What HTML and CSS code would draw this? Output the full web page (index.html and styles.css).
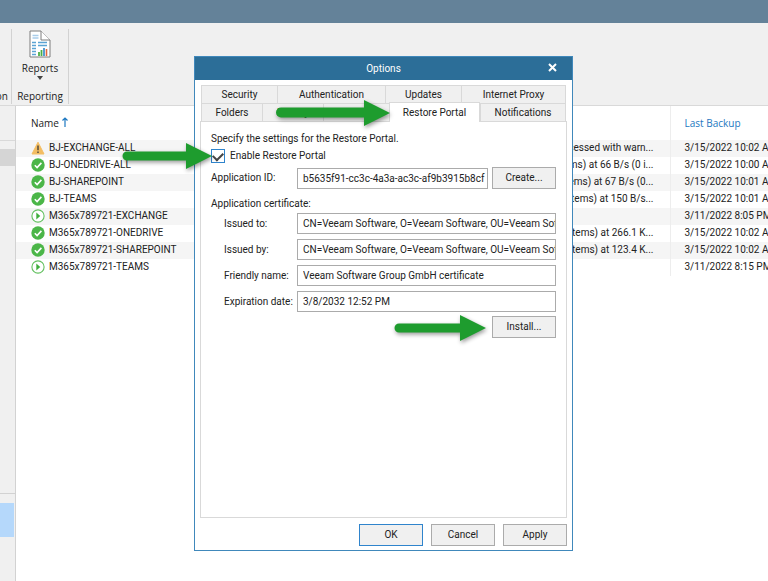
FILE: index.html
```html
<!DOCTYPE html>
<html lang="en">
<head>
    <meta charset="UTF-8">
    <meta name="viewport" content="width=device-width, initial-scale=1.0">
    <title>Options</title>
    <link rel="stylesheet" href="styles.css">
</head>
<body>
<svg class="defs" aria-hidden="true">
    <symbol id="ok" viewBox="0 0 14 14">
        <circle cx="7" cy="7" r="6.7" fill="#4bb648"/>
        <path d="M3.8 7.2l2.3 2.3 4.3-4.6" fill="none" stroke="#fff" stroke-width="1.6"/>
    </symbol>
    <symbol id="play" viewBox="0 0 14 14">
        <circle cx="7" cy="7" r="6.1" fill="#fff" stroke="#62c05f" stroke-width="1.1"/>
        <path d="M5.3 3.6v6.8L9.3 7z" fill="#3fae3c"/>
    </symbol>
    <symbol id="warn" viewBox="0 0 14 14">
        <path d="M7 1.2l6 11.8H1z" fill="#f3bd62" stroke="#f3bd62" stroke-linejoin="round"/>
        <path d="M7 4.6v4.6M7 10.4v1.6" stroke="#5b5140" stroke-width="1.6"/>
    </symbol>
</svg>

<div class="app">
    <div class="title-bar"></div>
    <div class="ribbon">
        <div class="ribbon-group ribbon-cut">
            <span>on</span>
        </div>
        <div class="ribbon-group">
            <button class="ribbon-button">
                <svg width="22" height="28" viewBox="0 0 22 28">
                    <path d="M1 1h11l9 9v17H1z" fill="#fff" stroke="#7d7d7d"/>
                    <path d="M12 1v9h9" fill="#fff" stroke="#7d7d7d"/>
                    <path d="M3.500 5.500h6M3.500 8h6" stroke="#a9cdea" stroke-width="1.500"/>
                    <path d="M3 12.500h4M9 12.500h9M3 15.500h4M9 15.500h9M3 18.500h4M3 21.500h4M3 24.500h4" stroke="#5ba4d4" stroke-width="1.700"/>
                    <path d="M10 26v-4M12.500 26v-6" stroke="#4cae45" stroke-width="1.800"/>
                    <path d="M15 26v-8" stroke="#2c84c6" stroke-width="1.600"/>
                    <path d="M17.500 26v-7" stroke="#e4673c" stroke-width="1.600"/>
                </svg>
                <span>Reports</span>
                <svg width="6" height="4" viewBox="0 0 6 4"><path d="M0 0h6L3 4z" fill="#444"/></svg>
            </button>
            <span>Reporting</span>
        </div>
    </div>

    <div class="workspace">
        <div class="sidebar">
            <div class="side-heading"></div>
            <div class="side-item"></div>
            <div class="side-tree"></div>
            <div class="side-active"></div>
        </div>
        <table class="jobs">
            <thead>
                <tr>
                    <th class="col-name">Name <svg width="6" height="10" viewBox="0 0 6 10"><path d="M3 10V1M.5 3.500L3 1l2.500 2.500" fill="none" stroke="#1d78c1" stroke-width="1.200"/></svg></th>
                    <th class="col-details"></th>
                    <th class="col-last">Last Backup</th>
                </tr>
            </thead>
            <tbody>
                <tr><td><svg class="status"><use href="#warn"/></svg>BJ-EXCHANGE-ALL</td><td>Processed with warn...</td><td>3/15/2022 10:02 AM</td></tr>
                <tr><td><svg class="status"><use href="#ok"/></svg>BJ-ONEDRIVE-ALL</td><td>items) at 66 B/s (0 i...</td><td>3/15/2022 10:00 AM</td></tr>
                <tr><td><svg class="status"><use href="#ok"/></svg>BJ-SHAREPOINT</td><td>items) at 67 B/s (0...</td><td>3/15/2022 10:01 AM</td></tr>
                <tr><td><svg class="status"><use href="#ok"/></svg>BJ-TEAMS</td><td>items) at 150 B/s...</td><td>3/15/2022 10:01 AM</td></tr>
                <tr><td><svg class="status"><use href="#play"/></svg>M365x789721-EXCHANGE</td><td></td><td>3/11/2022 8:05 PM</td></tr>
                <tr><td><svg class="status"><use href="#ok"/></svg>M365x789721-ONEDRIVE</td><td>items) at 266.1 K...</td><td>3/15/2022 10:02 AM</td></tr>
                <tr><td><svg class="status"><use href="#ok"/></svg>M365x789721-SHAREPOINT</td><td>items) at 123.4 K...</td><td>3/15/2022 10:02 AM</td></tr>
                <tr><td><svg class="status"><use href="#play"/></svg>M365x789721-TEAMS</td><td></td><td>3/11/2022 8:15 PM</td></tr>
            </tbody>
        </table>
    </div>
</div>

<div class="overlay">
    <div class="dialog" role="dialog" aria-labelledby="dialog-title">
        <div class="dialog-title">
            <span id="dialog-title">Options</span>
            <button class="close" aria-label="Close">
                <svg width="9" height="9" viewBox="0 0 9 9"><path d="M1 1l7 7M8 1L1 8" stroke="#fff" stroke-width="2"/></svg>
            </button>
        </div>
        <div class="dialog-body">
            <div class="tabs">
                <button class="tab tab-security">Security</button>
                <button class="tab tab-auth">Authentication</button>
                <button class="tab tab-updates">Updates</button>
                <button class="tab tab-proxy">Internet Proxy</button>
            </div>
            <div class="tabs">
                <button class="tab tab-folders">Folders</button>
                <button class="tab tab-folders">History</button>
                <button class="tab tab-blank"></button>
                <button class="tab tab-restore active">Restore Portal</button>
                <button class="tab tab-notify">Notifications</button>
            </div>
            <div class="panel">
                <p>Specify the settings for the Restore Portal.</p>
                <div class="check-row">
                    <input type="checkbox" id="enable" checked>
                    <label for="enable">Enable Restore Portal</label>
                </div>
                <div class="app-row">
                    <label for="app-id">Application ID:</label>
                    <input type="text" id="app-id" value="b5635f91-cc3c-4a3a-ac3c-af9b3915b8cf">
                    <button class="btn">Create...</button>
                </div>
                <p>Application certificate:</p>
                <div class="fields">
                    <div class="field">
                        <label for="issued-to">Issued to:</label>
                        <input type="text" id="issued-to" value="CN=Veeam Software, O=Veeam Software, OU=Veeam Software" readonly>
                    </div>
                    <div class="field">
                        <label for="issued-by">Issued by:</label>
                        <input type="text" id="issued-by" value="CN=Veeam Software, O=Veeam Software, OU=Veeam Software" readonly>
                    </div>
                    <div class="field">
                        <label for="friendly">Friendly name:</label>
                        <input type="text" id="friendly" value="Veeam Software Group GmbH certificate" readonly>
                    </div>
                    <div class="field">
                        <label for="expires">Expiration date:</label>
                        <input type="text" id="expires" value="3/8/2032 12:52 PM" readonly>
                    </div>
                </div>
                <div class="install-row">
                    <button class="btn">Install...</button>
                </div>
            </div>
            <div class="actions">
                <button class="btn btn-default">OK</button>
                <button class="btn">Cancel</button>
                <button class="btn">Apply</button>
            </div>
        </div>

        <!-- callout arrows -->
        <svg class="arrow arrow-tab" width="114" height="26"><path d="M5 7.500h83V0l26 13-26 13v-8.500H5a5 5 0 0 1 0-10z"/></svg>
        <svg class="arrow arrow-check" width="90" height="26"><path d="M5 8.500h59V0l26 13-26 13v-8.500H5a4.500 4.500 0 0 1 0-9z"/></svg>
        <svg class="arrow arrow-install" width="92" height="26"><path d="M5 8.500h61V0l26 13-26 13v-8.500H5a4.500 4.500 0 0 1 0-9z"/></svg>
    </div>
</div>
</body>
</html>
```
FILE: styles.css
```css
* {
    box-sizing: border-box;
}
body {
    margin: 0;
    overflow: hidden;
    color: #222;
    background-color: #fff;
    font-family: "Open Sans", sans-serif;
    font-size: 10px;
    line-height: 16px;
}
button, input {
    font: inherit;
    color: inherit;
    margin: 0;
}
p {
    margin: 0;
}
.defs {
    position: absolute;
    width: 0;
    height: 0;
}
.app {
    display: flex;
    flex-direction: column;
    height: 100vh;
}
.title-bar {
    height: 23px;
    background-color: #648299;
}
.ribbon {
    display: flex;
    height: 83px;
    padding: 6px 0 1px;
    background-color: #f0f0f0;
    border-bottom: 1px solid #d9d9d9;
}
.ribbon-group {
    display: flex;
    flex-direction: column;
    justify-content: space-between;
    align-items: center;
    width: 57px;
    border-right: 1px solid #d2d2d2;
}
.ribbon-cut {
    width: 12px;
    justify-content: flex-end;
    align-items: flex-end;
    padding-right: 3px;
}
.ribbon-button {
    display: flex;
    flex-direction: column;
    align-items: center;
    padding: 1px 0 0;
    border: none;
    background: none;
}
.ribbon-button span {
    margin-top: 2px;
}
.workspace {
    display: flex;
    flex: 1;
}
.sidebar {
    display: flex;
    flex-direction: column;
    flex: none;
    width: 16px;
    background-color: #f0f0f0;
    border-right: 1px solid #d2d2d2;
}
.side-heading {
    height: 35px;
    border-bottom: 1px solid #d9d9d9;
}
.side-item {
    height: 17px;
    margin-top: 8px;
    background-color: #d5d5d5;
}
.side-tree {
    flex: 1;
    border-bottom: 1px solid #d2d2d2;
}
.side-active {
    height: 34px;
    margin: 9px 1px 44px 0;
    background-color: #b5d8fb;
}
.jobs {
    flex: 1;
    align-self: flex-start;
    table-layout: fixed;
    border-collapse: collapse;
    width: 100%;
}
.jobs th {
    height: 34px;
    padding: 0 15px;
    font-weight: normal;
    text-align: left;
}
.jobs td {
    height: 17px;
    padding: 0 16px 0 15px;
    font-family: Roboto, sans-serif;
    vertical-align: top;
    white-space: nowrap;
    overflow: hidden;
}
.jobs td:nth-child(2) {
    text-align: right;
}
.jobs td:nth-child(3), .jobs th:nth-child(3) {
    padding: 0 0 0 14px;
    border-left: 1px solid #ededed;
}
.jobs tbody tr:nth-child(odd) {
    background-color: #f5f5f5;
}
.col-last {
    width: 98px;
    color: #1d78c1;
}
.status {
    width: 14px;
    height: 14px;
    margin: 1px 4px 0 0;
    vertical-align: top;
}
.overlay {
    position: absolute;
    top: 56px;
    left: 0;
    right: 0;
    display: flex;
    justify-content: center;
    padding-right: 1px;
}
.dialog {
    position: relative;
    width: 379px;
    background-color: #fff;
    border: 1px solid #4088bb;
    font-family: Roboto, sans-serif;
}
.dialog-title {
    display: flex;
    align-items: center;
    justify-content: center;
    height: 23px;
    color: #fff;
    background-color: #2c6e98;
}
.close {
    position: absolute;
    top: 5px;
    right: 14px;
    display: flex;
    padding: 1px;
    border: none;
    background: none;
}
.dialog-body {
    padding: 5px 5px 4px;
}
.tabs {
    display: flex;
    height: 18px;
    padding: 0 1px;
}
.tab {
    padding: 0;
    line-height: 16px;
    background-color: #f0f0f0;
    border: 1px solid #d9d9d9;
    border-width: 1px 0 0 1px;
}
.tab:last-child {
    border-right-width: 1px;
}
.tab-security, .tab-updates {
    width: 76px;
}
.tab-auth {
    width: 108px;
}
.tab-proxy, .tab-notify {
    flex: 1;
}
.tab-folders {
    width: 61px;
}
.tab-blank {
    width: 66px;
}
.tab-restore {
    width: 91px;
}
.tab.active {
    position: relative;
    height: 20px;
    margin-top: -1px;
    background-color: #fff;
    border-right-width: 1px;
}
.panel {
    min-height: 397px;
    padding: 9px 10px;
    border: 1px solid #d9d9d9;
}
.check-row {
    display: flex;
    align-items: center;
    gap: 5px;
    height: 18px;
}
.check-row input {
    appearance: none;
    display: grid;
    place-items: center;
    width: 14px;
    height: 14px;
    background-color: #fff;
    border: 1px solid #2f84cc;
}
.check-row input:checked::before {
    content: "";
    width: 8px;
    height: 5px;
    margin-bottom: 2px;
    border: solid #444;
    border-width: 0 0 2px 2px;
    transform: rotate(-45deg);
}
.app-row {
    display: flex;
    align-items: center;
    gap: 4px;
    margin: 2px 0 7px;
}
.app-row label {
    width: 82px;
}
input[type="text"] {
    flex: 1;
    min-width: 0;
    height: 21px;
    padding: 0 0 0 5px;
    border: 1px solid #ababab;
    background-color: #fff;
    border-radius: 0;
}
.btn {
    width: 64px;
    height: 22px;
    padding: 0;
    background-color: #f0f0f0;
    border: 1px solid #ababab;
}
.btn-default {
    border-color: #2f84cc;
}
.fields {
    display: flex;
    flex-direction: column;
    gap: 5px;
    margin-top: 1px;
    padding-left: 13px;
}
.field {
    display: flex;
    align-items: center;
}
.field label {
    width: 73px;
    white-space: nowrap;
}
.install-row {
    display: flex;
    justify-content: flex-end;
    margin-top: 4px;
}
.actions {
    display: flex;
    justify-content: flex-end;
    gap: 8px;
    margin-top: 6px;
}
.arrow {
    position: absolute;
    overflow: visible;
    fill: #1e9c2e;
    filter: drop-shadow(1px 2px 2px rgba(0, 0, 0, 0.4));
}
.arrow-tab {
    top: 43px;
    left: 81px;
}
.arrow-check {
    top: 86px;
    left: -73px;
}
.arrow-install {
    top: 258px;
    left: 199px;
}
```
